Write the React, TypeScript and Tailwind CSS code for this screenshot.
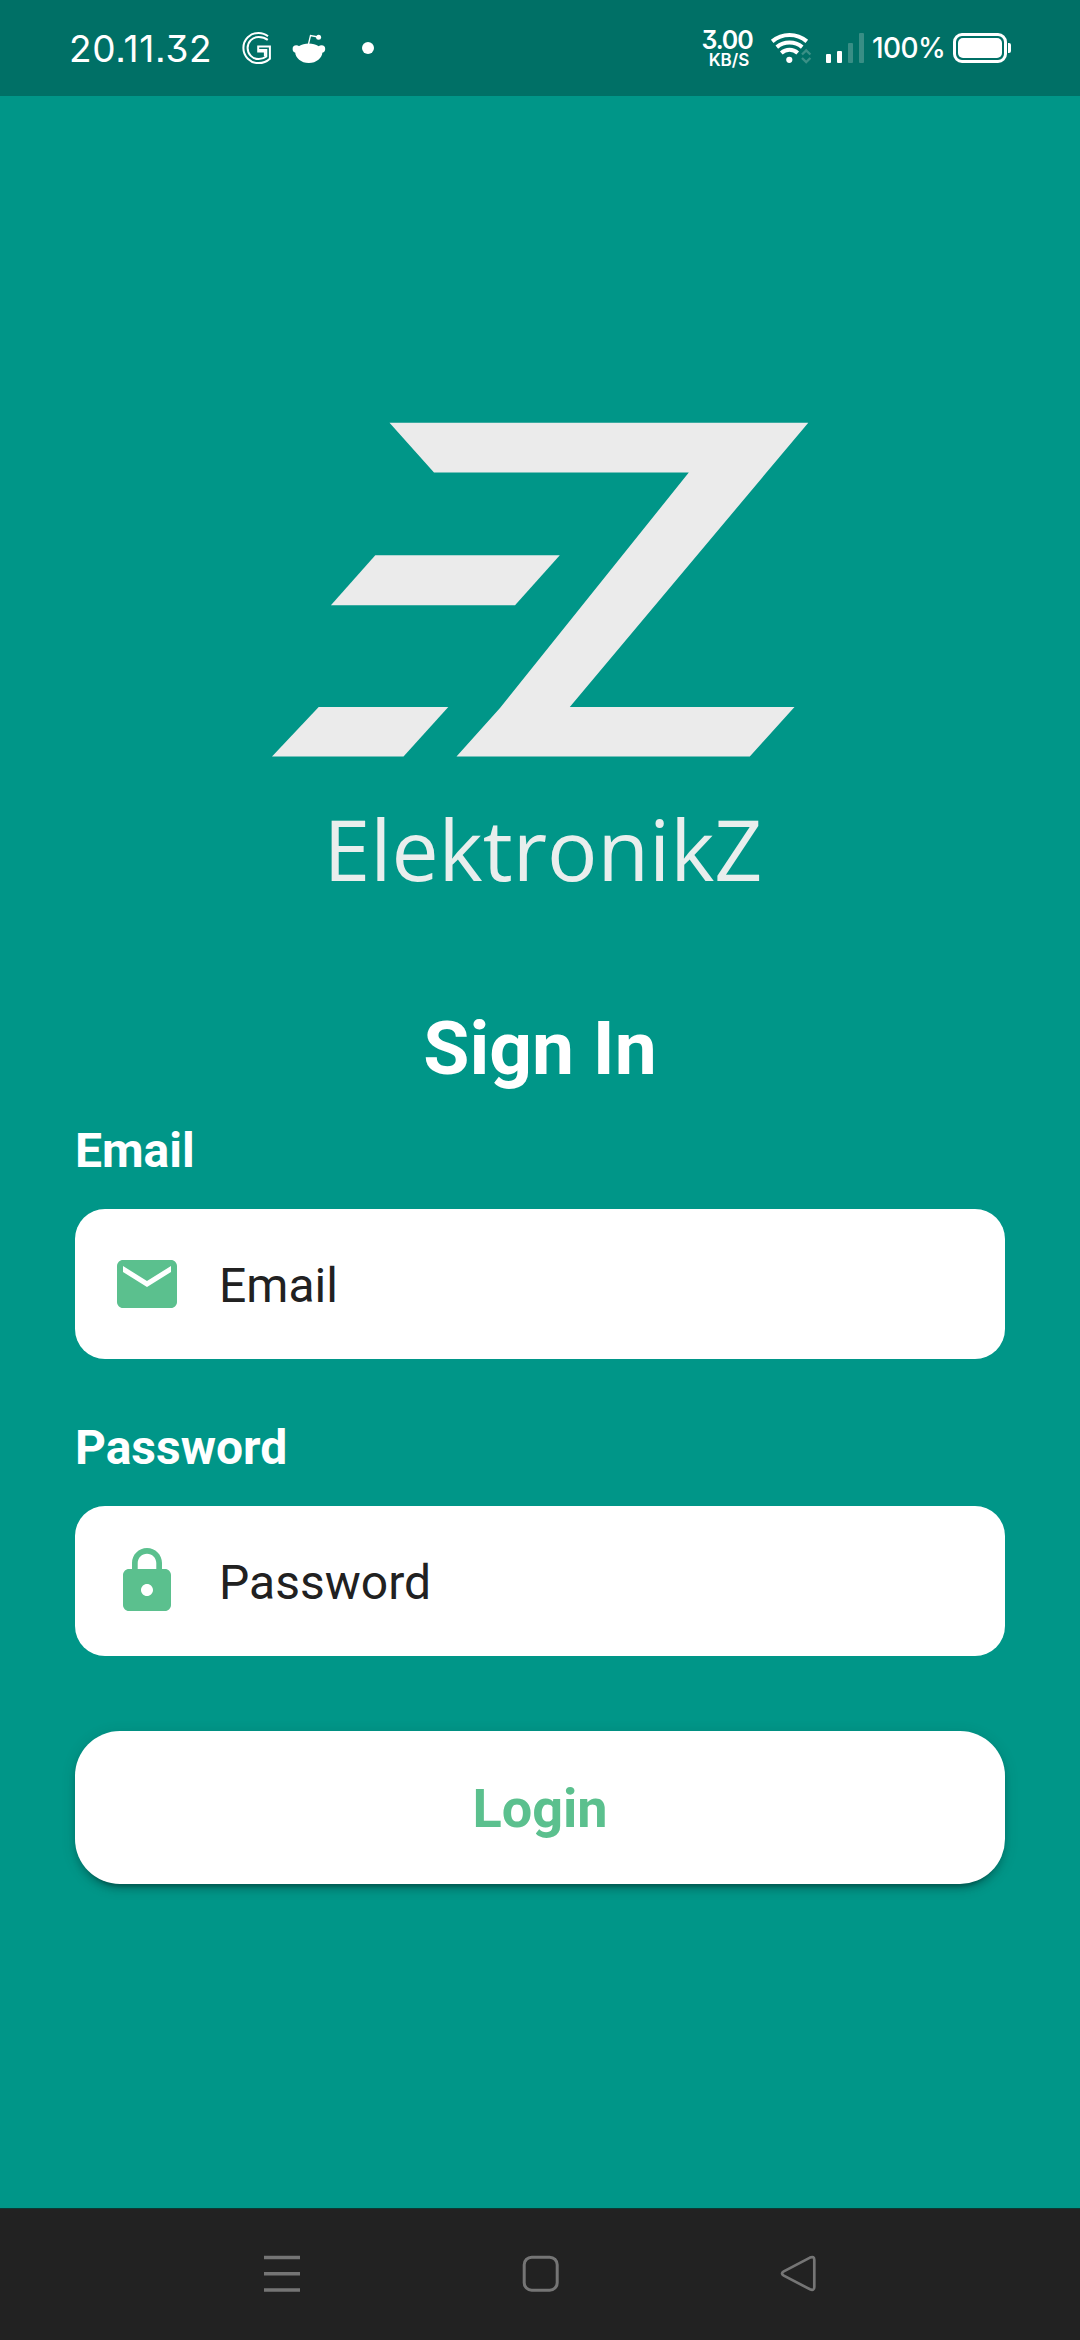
import type { ReactNode } from "react";

function GoogleIcon() {
  return (
    <svg className="ml-[28px] h-[36px] w-[32px] shrink-0" viewBox="0 0 32 36" fill="none">
      <path
        d="M27 6.300C24.200 3.900 21 2.900 17.500 2.900a15 15 0 1 0 0 30.200c4.300 0 8.300-1.500 11.400-4.400V16.400H17.200v5.200h6.700v4.700"
        stroke="#fff"
        strokeWidth="2"
      />
      <path
        d="M26.800 9.900C24 7.700 21 6.900 17.700 6.900a11 11 0 1 0 0 22.200c2.800 0 5.300-.8 7.600-2.600v-6.400h-8"
        stroke="#fff"
        strokeWidth="2"
      />
    </svg>
  );
}

function RedditIcon() {
  return (
    <svg className="ml-[19px] h-[32px] w-[34px] shrink-0" viewBox="0 0 34 32" fill="#fff">
      <path d="M16.500 12 18.500 3.500 26 5" fill="none" stroke="#fff" strokeWidth="1.300" />
      <circle cx="26.600" cy="5.200" r="2.500" />
      <circle cx="4.300" cy="17" r="3.700" />
      <circle cx="29.500" cy="17" r="3.700" />
      <path d="M16.800 11.500c7.500 0 13.600 4 13.600 8.500 0 6-6 11-13.600 11S3.200 26 3.200 20c0-4.500 6.100-8.500 13.600-8.500Z" />
    </svg>
  );
}

function WifiIcon() {
  return (
    <svg className="ml-[17px] h-[32px] w-[42px] shrink-0" viewBox="0 0 42 32" fill="none">
      <path d="M2.200 9.400C12.300.9 26.700.9 36.800 9.400" stroke="#fff" strokeWidth="4" />
      <path d="M6.800 15.100c7.300-6.100 18.100-6.100 25.400 0" stroke="#fff" strokeWidth="4" />
      <path d="M11.300 21c4.700-4.200 11.700-4.200 16.400 0" stroke="#fff" strokeWidth="4" />
      <circle cx="19.300" cy="27.800" r="3.100" fill="#fff" />
      <path d="m32 22.500 4.200-4 4.200 4M32 26l4.200 4 4.200-4" stroke="#3a9086" strokeWidth="2.400" />
    </svg>
  );
}

function StatusBar() {
  return (
    <header className="flex h-24 shrink-0 items-center bg-[#007066] font-['Inter',sans-serif] text-white">
      <span className="ml-[69px] w-[144px] text-[37px] leading-none tracking-[0.7px] whitespace-nowrap [font-feature-settings:'cv09','ss07']">
        20.11.32
      </span>
      <GoogleIcon />
      <RedditIcon />
      <span className="ml-9 size-3 rounded-full bg-white" />
      <div className="ml-auto flex w-[52px] flex-col items-center font-semibold">
        <span className="text-[25px] leading-[20px] tracking-[-1.2px] whitespace-nowrap [font-feature-settings:'cv09']">3.00</span>
        <span className="mt-[3px] ml-1 text-[17px] leading-[14px] whitespace-nowrap">KB/S</span>
      </div>
      <WifiIcon />
      <div className="ml-[14px] flex h-[30px] items-end gap-1.5">
        <span className="h-[9px] w-[5px] rounded-[1px] bg-white" />
        <span className="h-3 w-[5px] rounded-[1px] bg-white" />
        <span className="h-5 w-[5px] rounded-[1px] bg-[#388e85]" />
        <span className="h-[30px] w-[5px] rounded-[1px] bg-[#388e85]" />
      </div>
      <span className="ml-[8px] w-[72px] text-[28px] leading-none font-medium tracking-[-0.6px] whitespace-nowrap">100%</span>
      <div className="ml-[9px] flex h-[30px] w-[54px] rounded-[9px] border-[3px] border-white p-[2px]">
        <span className="flex-1 rounded-[5px] bg-white" />
      </div>
      <span className="mr-[69px] ml-px h-2.5 w-[3px] rounded-r-[2px] bg-white" />
    </header>
  );
}

function Logo() {
  return (
    <div className="mt-[326px] flex flex-col items-center">
      <svg className="h-[336px] w-[538px]" viewBox="271 422 538 336" fill="#ebebeb">
        <polygon points="389.500,422.700 808.300,422.700 569.800,706.900 794.500,706.900 749.800,756.600 456.500,756.600 500,708 688.800,472.500 434,472.500" />
        <polygon points="375.300,555.200 559.800,555.200 515,605.200 330.900,605.200" />
        <polygon points="318.700,707.100 448.300,707.100 403.500,756.600 272,756.600" />
      </svg>
      <span className="mt-[34px] ml-[6px] h-[113px] font-['Open_Sans',sans-serif] text-[84px] leading-[113px] whitespace-nowrap text-[#e9eeed]">
        ElektronikZ
      </span>
    </div>
  );
}

function MailIcon() {
  return (
    <svg className="size-[72px]" viewBox="0 0 24 24" fill="#5bc08e">
      <path d="M20 4H4c-1.100 0-1.990.9-1.990 2L2 18c0 1.100.9 2 2 2h16c1.100 0 2-.9 2-2V6c0-1.100-.9-2-2-2zm0 4l-8 5-8-5V6l8 5 8-5v2z" />
    </svg>
  );
}

function LockIcon() {
  return (
    <svg className="size-[72px]" viewBox="0 0 24 24" fill="#5bc08e">
      <path d="M18 8h-1V6c0-2.760-2.240-5-5-5S7 3.240 7 6v2H6c-1.100 0-2 .9-2 2v10c0 1.100.9 2 2 2h12c1.100 0 2-.9 2-2V10c0-1.100-.9-2-2-2zm-6 9c-1.100 0-2-.9-2-2s.9-2 2-2 2 .9 2 2-.9 2-2 2zm3.100-9H8.900V6c0-1.710 1.390-3.100 3.100-3.100 1.710 0 3.100 1.390 3.100 3.100v2z" />
    </svg>
  );
}

function Field({ label, icon }: { label: string; icon: ReactNode }) {
  return (
    <div className="flex flex-col">
      <span className="text-[48px] leading-[57px] font-bold text-white">{label}</span>
      <div className="mt-[30px] flex h-[150px] items-center rounded-[30px] bg-white pl-9">
        {icon}
        <span className="ml-9 pt-[4px] text-[48px] leading-[56px] text-[#212121]">{label}</span>
      </div>
    </div>
  );
}

function NavBar() {
  return (
    <nav className="flex h-[132px] shrink-0 items-center justify-between border-t border-[#0b3834] bg-[#222222] pr-[260px] pb-[2px] pl-[261px]">
      <svg className="size-[42px]" viewBox="0 0 42 42" stroke="#757575" strokeWidth="3.500">
        <path d="M3 4.500h36M3 20.700h36M3 37h36" />
      </svg>
      <svg className="size-[42px]" viewBox="0 0 42 42" fill="none" stroke="#757575" strokeWidth="3">
        <rect x="4.200" y="4.200" width="33" height="33" rx="7.500" />
      </svg>
      <svg className="size-[42px]" viewBox="0 0 42 42" fill="none" stroke="#757575" strokeWidth="2.700">
        <path d="M32 4.600 5.800 18.400Q2.200 20.500 5.800 22.600L32 36.300Q36.300 38 36.300 34V7Q36.300 2.800 32 4.600Z" />
      </svg>
    </nav>
  );
}

export default function App() {
  return (
    <div className="flex h-[2340px] w-[1080px] flex-col overflow-hidden bg-[#009688] font-['Roboto',sans-serif]">
      <StatusBar />
      <main className="flex flex-1 flex-col px-[75px]">
        <Logo />
        <h1 className="mt-[99px] text-center text-[75px] leading-[88px] font-bold text-white">Sign In</h1>
        <div className="mt-[30px] flex flex-col gap-[60px]">
          <Field label="Email" icon={<MailIcon />} />
          <Field label="Password" icon={<LockIcon />} />
        </div>
        <button className="mt-[75px] flex h-[153px] items-center justify-center rounded-[45px] bg-white pt-[2px] text-[54px] leading-[63px] font-bold text-[#5bc08e] shadow-[0_9px_3px_-6px_rgba(0,0,0,0.2),0_6px_6px_0_rgba(0,0,0,0.14),0_3px_15px_0_rgba(0,0,0,0.12)]">
          Login
        </button>
      </main>
      <NavBar />
    </div>
  );
}
